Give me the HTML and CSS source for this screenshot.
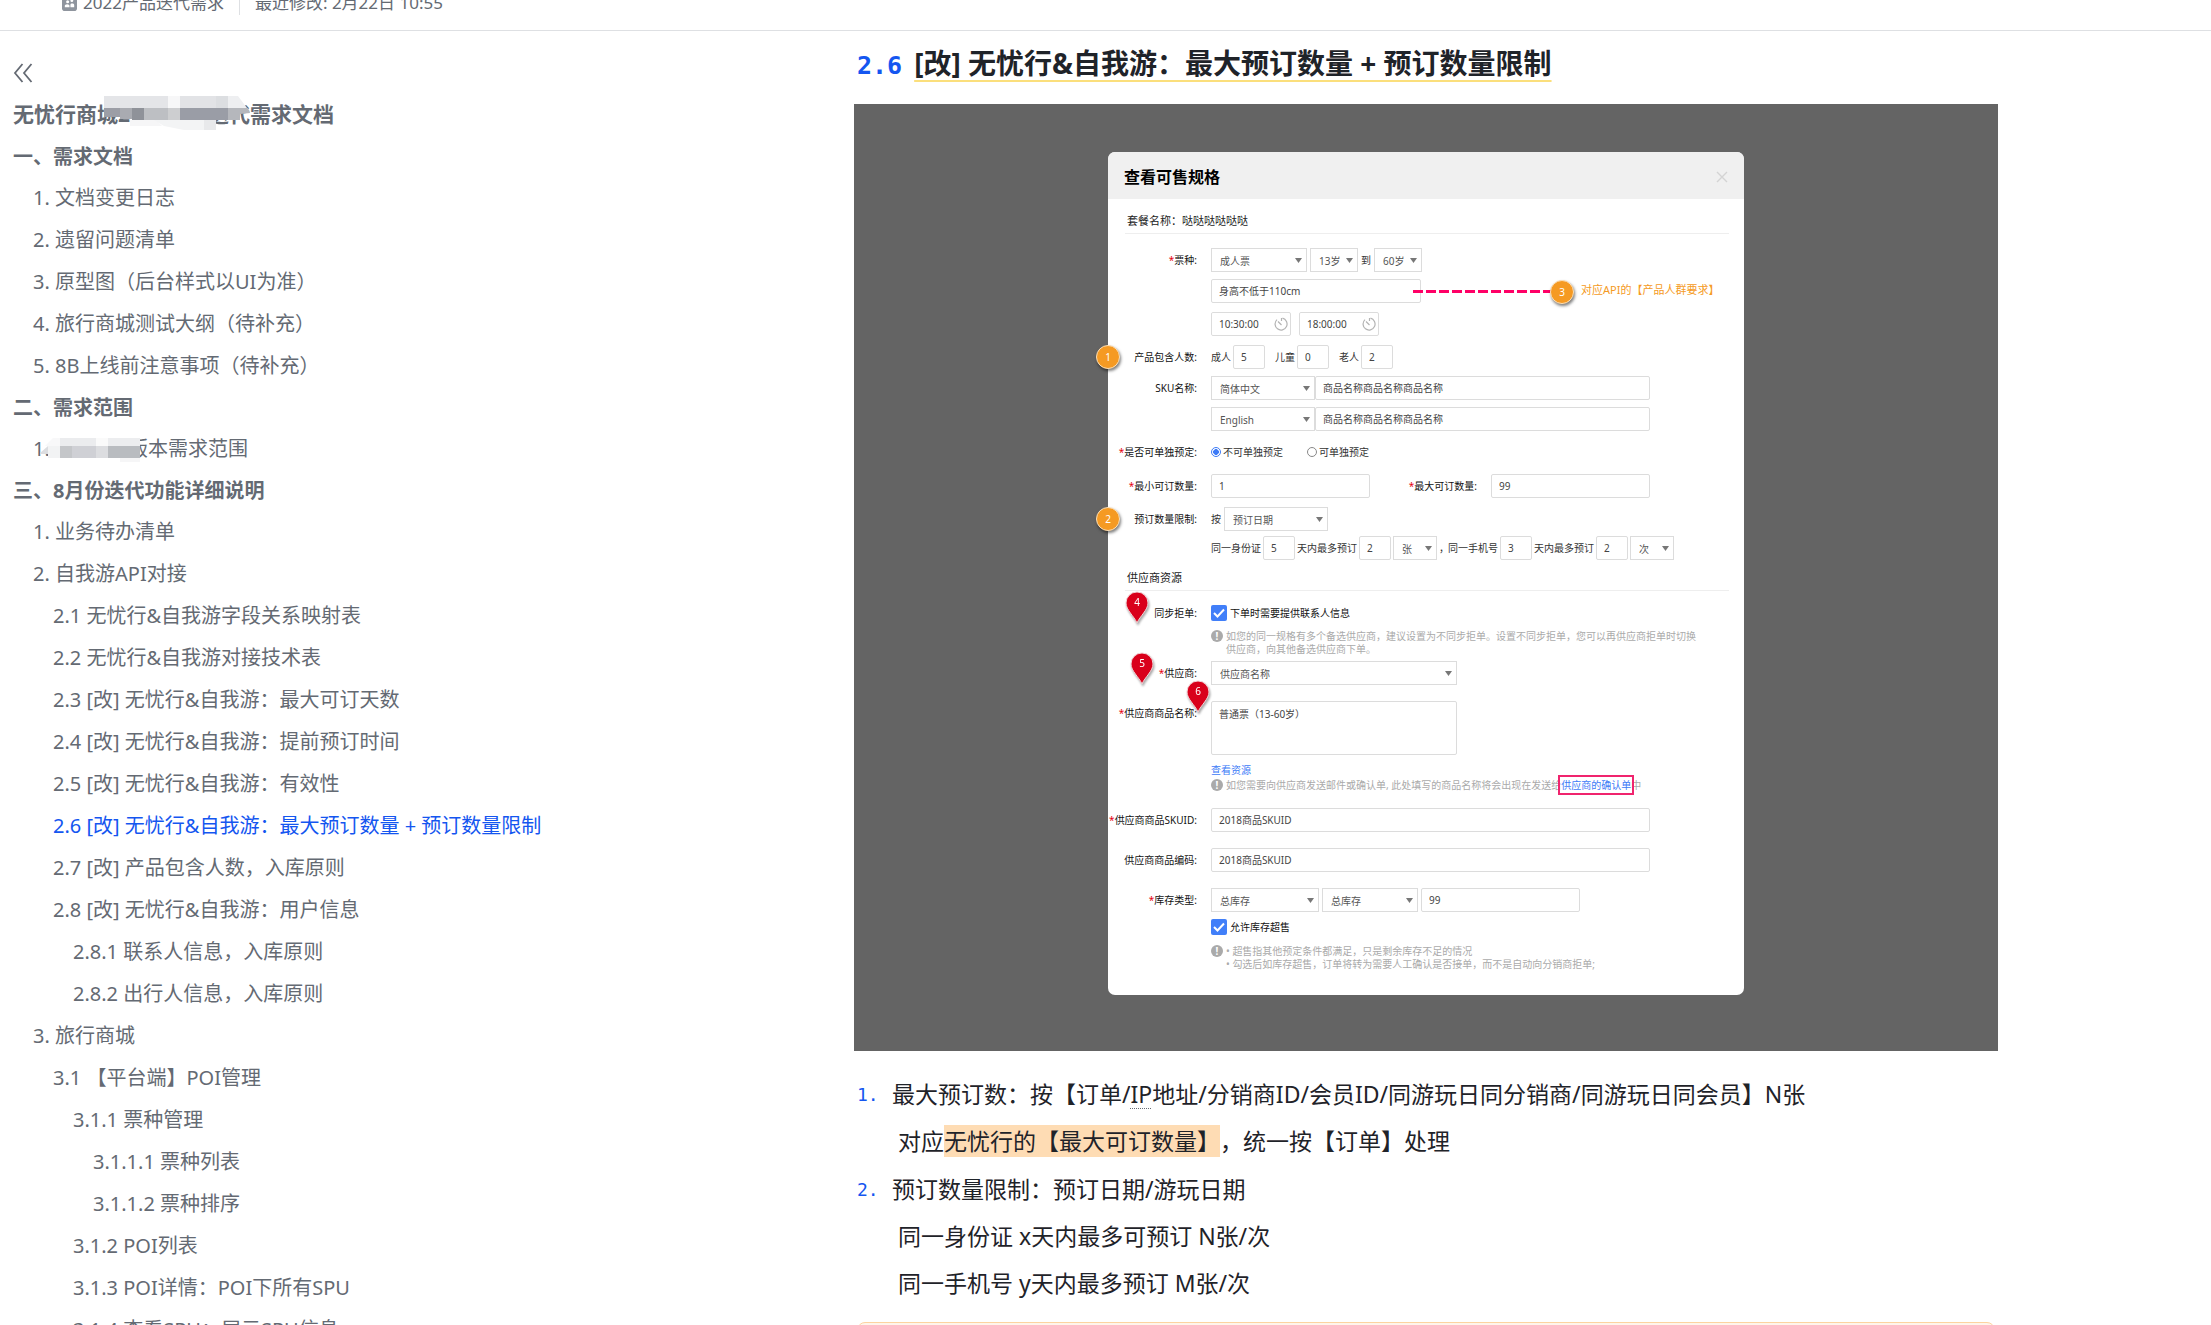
FILE: index.html
```html
<!DOCTYPE html>
<html lang="zh-CN">
<head>
<meta charset="utf-8">
<title>迭代需求文档</title>
<link rel="stylesheet" href="styles.css">
</head>
<body>
<header class="topbar">
  <div class="topbar-meta">
    <svg class="topbar-icon" viewBox="0 0 16 16" aria-hidden="true"><rect width="16" height="16" rx="3" fill="#8f959e"/><circle cx="6" cy="6" r="1.6" fill="#fff"/><circle cx="10.500" cy="5" r="1.500" fill="#fff"/><path d="M3 12v-1.500c0-1 1-1.800 2.500-1.800S8 9.500 8 10.500V12zM9 12V9.500c0-1 .6-1.500 1.700-1.500S13 8.500 13 9.500V12z" fill="#fff"/></svg>
    <a class="topbar-folder" href="#">2022产品迭代需求</a>
    <span class="topbar-time">最近修改: 2月22日 10:55</span>
  </div>
</header>
<div class="layout">
  <aside class="sidebar">
    <button class="collapse" type="button" aria-label="收起目录"><svg viewBox="0 0 20 20" aria-hidden="true"><path d="M9.500 1 2 10l7.500 9M18.500 1 11 10l7.500 9" fill="none" stroke="#646a73" stroke-width="1.800"/></svg></button>
    <nav class="toc" aria-label="目录">
      <a class="toc-title" href="#">无忧行商城<span class="redacted redacted-title">2<svg class="mosaic-title" viewBox="0 0 146 34" aria-hidden="true"><path d="M0 0h64v12H0z" fill="#e4e5e8"/><path d="M64 0h12v12H64z" fill="#f7f7f8"/><path d="M76 0h36v12H76z" fill="#e2e3e6"/><path d="M112 0h12v12h-12z" fill="#dcdee1"/><path d="M124 0h10l9 12h-19z" fill="#eeeff1"/><path d="M0 12h16v9H0z" fill="#9c9ea6"/><path d="M16 12h12v11H16z" fill="#a9abb1"/><path d="M28 12h12v12H28z" fill="#8f9299"/><path d="M40 12h24v12H40z" fill="#bdbfc3"/><path d="M64 12h12v12H64z" fill="#cdced0"/><path d="M76 12h48v12H76z" fill="#9a9da6"/><path d="M124 12h20l2 5-10 1v6h-12z" fill="#b5b7bc"/><path d="M26 24h26l6 6h-32z" fill="#f6f6f7"/><path d="M50 24h50v10H80l-20-4z" fill="#f3f4f5"/><path d="M100 24h12v10h-12z" fill="#e8e9eb"/></svg></span>迭代需求文档</a>
      <a class="toc-chapter" href="#">一、需求文档</a>
      <a class="toc-2" href="#">1. 文档变更日志</a>
      <a class="toc-2" href="#">2. 遗留问题清单</a>
      <a class="toc-2" href="#">3. 原型图（后台样式以UI为准）</a>
      <a class="toc-2" href="#">4. 旅行商城测试大纲（待补充）</a>
      <a class="toc-2" href="#">5. 8B上线前注意事项（待补充）</a>
      <a class="toc-chapter" href="#">二、需求范围</a>
      <a class="toc-2" href="#">1. <span class="redacted redacted-entry"><svg class="mosaic-entry" viewBox="0 0 102 24" aria-hidden="true"><path d="M6 8 14 0h7v8z" fill="#f8f8f9"/><path d="M21 0h36v8H21z" fill="#ebecee"/><path d="M57 0h12v8H57z" fill="#fafafa"/><path d="M69 0h32v8H69z" fill="#ecedef"/><path d="M1 15 9 8v8H1z" fill="#dcdde0"/><path d="M9 8h12v12H9z" fill="#f2f3f4"/><path d="M21 8h12v12H21z" fill="#c4c6c9"/><path d="M33 8h24v12H33z" fill="#cfd0d5"/><path d="M57 8h12v12H57z" fill="#dcdde0"/><path d="M69 8h32v12H69z" fill="#b9bcc0"/><path d="M81 20h20v4H81z" fill="#f6f6f7"/></svg></span>版本需求范围</a>
      <a class="toc-chapter" href="#">三、8月份迭代功能详细说明</a>
      <a class="toc-2" href="#">1. 业务待办清单</a>
      <a class="toc-2" href="#">2. 自我游API对接</a>
      <a class="toc-3" href="#">2.1 无忧行&amp;自我游字段关系映射表</a>
      <a class="toc-3" href="#">2.2 无忧行&amp;自我游对接技术表</a>
      <a class="toc-3" href="#">2.3 [改] 无忧行&amp;自我游：最大可订天数</a>
      <a class="toc-3" href="#">2.4 [改] 无忧行&amp;自我游：提前预订时间</a>
      <a class="toc-3" href="#">2.5 [改] 无忧行&amp;自我游：有效性</a>
      <a class="toc-3 is-current" href="#s26" aria-current="true">2.6 [改] 无忧行&amp;自我游：最大预订数量 + 预订数量限制</a>
      <a class="toc-3" href="#">2.7 [改] 产品包含人数，入库原则</a>
      <a class="toc-3" href="#">2.8 [改] 无忧行&amp;自我游：用户信息</a>
      <a class="toc-4" href="#">2.8.1 联系人信息，入库原则</a>
      <a class="toc-4" href="#">2.8.2 出行人信息，入库原则</a>
      <a class="toc-2" href="#">3. 旅行商城</a>
      <a class="toc-3" href="#">3.1 【平台端】POI管理</a>
      <a class="toc-4" href="#">3.1.1 票种管理</a>
      <a class="toc-5" href="#">3.1.1.1 票种列表</a>
      <a class="toc-5" href="#">3.1.1.2 票种排序</a>
      <a class="toc-4" href="#">3.1.2 POI列表</a>
      <a class="toc-4" href="#">3.1.3 POI详情：POI下所有SPU</a>
      <a class="toc-4" href="#">3.1.4 查看SPU：展示SPU信息</a>
    </nav>
  </aside>

  <main class="article">
    <h2 class="heading" id="s26"><span class="heading-no">2.6</span><span class="heading-text">[改] 无忧行&amp;自我游：最大预订数量 + 预订数量限制</span></h2>

    <figure class="mockup">
      <div class="dialog">
        <div class="dialog-head">
          <h3>查看可售规格</h3>
          <button class="dialog-close" type="button" aria-label="关闭"><svg viewBox="0 0 12 12" aria-hidden="true"><path d="M1 1l10 10M11 1 1 11" fill="none" stroke="#d4d4d4" stroke-width="1.400"/></svg></button>
        </div>
        <form class="form">
          <h4 class="section">套餐名称：哒哒哒哒哒哒</h4>
          <div class="row first">
            <label class="name required" for="ticket">票种:</label>
            <div class="fields gap-3">
              <select id="ticket" class="w-96"><option>成人票</option></select>
              <select class="w-48" aria-label="最小年龄"><option>13岁</option></select>
              <span>到</span>
              <select class="w-48" aria-label="最大年龄"><option>60岁</option></select>
            </div>
          </div>
          <div class="row sp-7">
            <div class="fields col-2"><input class="w-210" type="text" value="身高不低于110cm" aria-label="人群要求"></div>
          </div>
          <div class="row sp-9">
            <div class="fields col-2 gap-8">
              <span class="time"><input type="text" value="10:30:00" aria-label="开始时间"><svg viewBox="0 0 14 14" aria-hidden="true"><path d="M8.500 1.200A6 6 0 1 1 3 2.600M7.500 1v3M4 4.500 7.500 8" fill="none" stroke="#b4b4b4" stroke-width="1.200"/></svg></span>
              <span class="time"><input type="text" value="18:00:00" aria-label="结束时间"><svg viewBox="0 0 14 14" aria-hidden="true"><path d="M8.500 1.200A6 6 0 1 1 3 2.600M7.500 1v3M4 4.500 7.500 8" fill="none" stroke="#b4b4b4" stroke-width="1.200"/></svg></span>
            </div>
          </div>
          <div class="row sp-9">
            <span class="name">产品包含人数:</span>
            <div class="fields gap-10">
              <label class="pair">成人<input class="w-32" type="text" value="5"></label>
              <label class="pair">儿童<input class="w-32" type="text" value="0"></label>
              <label class="pair">老人<input class="w-32" type="text" value="2"></label>
            </div>
          </div>
          <div class="row sp-7">
            <label class="name" for="sku1">SKU名称:</label>
            <div class="fields">
              <select class="w-104" aria-label="语言"><option>简体中文</option></select>
              <input id="sku1" class="w-335" type="text" value="商品名称商品名称商品名称">
            </div>
          </div>
          <div class="row sp-7">
            <div class="fields col-2">
              <select class="w-104" aria-label="语言"><option>English</option></select>
              <input class="w-335" type="text" value="商品名称商品名称商品名称" aria-label="英文名称">
            </div>
          </div>
          <div class="row sp-9">
            <span class="name required">是否可单独预定:</span>
            <div class="fields gap-24">
              <label class="radio"><input type="radio" name="single" checked>不可单独预定</label>
              <label class="radio"><input type="radio" name="single">可单独预定</label>
            </div>
          </div>
          <div class="row sp-10">
            <label class="name required" for="min">最小可订数量:</label>
            <div class="fields gap-14">
              <input id="min" class="w-159" type="text" value="1">
              <label class="name name-mid required" for="max">最大可订数量:</label>
              <input id="max" class="w-159" type="text" value="99">
            </div>
          </div>
          <div class="row sp-9">
            <label class="name" for="limit">预订数量限制:</label>
            <div class="fields gap-3">
              <span>按</span>
              <select id="limit" class="w-104"><option>预订日期</option></select>
            </div>
          </div>
          <div class="row sp-5">
            <div class="fields col-2 gap-2">
              <span>同一身份证</span>
              <input class="w-32" type="text" value="5" aria-label="身份证天数">
              <span>天内最多预订</span>
              <input class="w-32" type="text" value="2" aria-label="身份证数量">
              <select class="w-44" aria-label="身份证单位"><option>张</option></select>
              <span class="comma">，</span><span>同一手机号</span>
              <input class="w-32" type="text" value="3" aria-label="手机号天数">
              <span>天内最多预订</span>
              <input class="w-32" type="text" value="2" aria-label="手机号数量">
              <select class="w-44" aria-label="手机号单位"><option>次</option></select>
            </div>
          </div>

          <h4 class="section section-next">供应商资源</h4>
          <div class="row sp-10">
            <span class="name">同步拒单:</span>
            <div class="fields"><label class="check"><input type="checkbox" checked>下单时需要提供联系人信息</label></div>
          </div>
          <div class="row sp-5">
            <div class="hint col-2"><i class="alert">!</i><p>如您的同一规格有多个备选供应商，建议设置为不同步拒单。设置不同步拒单，您可以再供应商拒单时切换<br>供应商，向其他备选供应商下单。</p></div>
          </div>
          <div class="row sp-5">
            <label class="name required" for="supplier">供应商:</label>
            <div class="fields"><select id="supplier" class="w-246"><option>供应商名称</option></select></div>
          </div>
          <div class="row sp-16">
            <label class="name required" for="goods">供应商商品名称:</label>
            <div class="fields"><textarea id="goods" class="w-246">普通票（13-60岁）</textarea></div>
          </div>
          <div class="row sp-7">
            <a class="view-link col-2" href="#">查看资源</a>
            <div class="hint col-2"><i class="alert">!</i><p>如您需要向供应商发送邮件或确认单, 此处填写的商品名称将会出现在发送给<a class="boxed" href="#">供应商的确认单</a>中</p></div>
          </div>
          <div class="row sp-16">
            <label class="name required" for="skuid">供应商商品SKUID:</label>
            <div class="fields"><input id="skuid" class="w-439" type="text" value="2018商品SKUID"></div>
          </div>
          <div class="row sp-16">
            <label class="name" for="code">供应商商品编码:</label>
            <div class="fields"><input id="code" class="w-439" type="text" value="2018商品SKUID"></div>
          </div>
          <div class="row sp-16">
            <label class="name required" for="stock">库存类型:</label>
            <div class="fields gap-3">
              <select id="stock" class="w-108"><option>总库存</option></select>
              <select class="w-96" aria-label="库存范围"><option>总库存</option></select>
              <input class="w-159" type="text" value="99" aria-label="库存数量">
            </div>
          </div>
          <div class="row sp-7">
            <label class="check col-2"><input type="checkbox" checked>允许库存超售</label>
          </div>
          <div class="row sp-10">
            <div class="hint col-2"><i class="alert">!</i><ul><li>超售指其他预定条件都满足，只是剩余库存不足的情况</li><li>勾选后如库存超售，订单将转为需要人工确认是否接单，而不是自动向分销商拒单;</li></ul></div>
          </div>
        </form>

        <span class="leader"></span>
        <span class="dot dot-1">1</span>
        <span class="dot dot-2">2</span>
        <span class="dot dot-3">3</span>
        <span class="remark">对应API的【产品人群要求】</span>
        <span class="pin pin-4"><svg viewBox="0 0 26 34" aria-hidden="true"><path d="M13 32C10 25 2 19 2 12a11 11 0 0 1 22 0c0 7-8 13-11 20z" fill="#d9001b" stroke="#f1d3d6"/></svg><b>4</b></span>
        <span class="pin pin-5"><svg viewBox="0 0 26 34" aria-hidden="true"><path d="M13 32C10 25 2 19 2 12a11 11 0 0 1 22 0c0 7-8 13-11 20z" fill="#d9001b" stroke="#f1d3d6"/></svg><b>5</b></span>
        <span class="pin pin-6"><svg viewBox="0 0 26 34" aria-hidden="true"><path d="M13 32C10 25 2 19 2 12a11 11 0 0 1 22 0c0 7-8 13-11 20z" fill="#d9001b" stroke="#f1d3d6"/></svg><b>6</b></span>
      </div>
    </figure>

    <ol class="notes">
      <li>最大预订数：按【订单/<span class="spell">IP</span>地址/分销商ID/会员ID/同游玩日同分销商/同游玩日同会员】N张
        <p>对应<mark>无忧行的【最大可订数量】</mark>，统一按【订单】处理</p>
      </li>
      <li>预订数量限制：预订日期/游玩日期
        <p>同一身份证 x天内最多可预订 N张/次</p>
        <p>同一手机号 y天内最多预订 M张/次</p>
      </li>
    </ol>
    <div class="callout"></div>
  </main>
</div>
</body>
</html>
```
FILE: styles.css
```css
* { box-sizing: border-box; }

body {
  margin: 0;
  height: 100vh;
  overflow: hidden;
  background: #fff;
  color: #1f2329;
  font-family: "Noto Sans", "Noto Sans CJK SC", sans-serif;
  text-spacing-trim: space-all;
}

a { color: inherit; text-decoration: none; }
button { padding: 0; border: 0; background: none; }
svg { display: block; }

/* Top bar, partly scrolled out of view */
.topbar {
  height: 31px;
  overflow: hidden;
  border-bottom: 1px solid #dee0e3;
}
.topbar-meta {
  display: flex;
  align-items: center;
  margin: -9px 0 0 62px;
  color: #646a73;
  font-size: 17px;
  line-height: 24px;
}
.topbar-icon { width: 15px; height: 15px; margin-right: 6px; }
.topbar-folder { padding-right: 15px; border-right: 1px solid #dee0e3; }
.topbar-time { padding-left: 15px; }

.layout {
  display: grid;
  grid-template-columns: minmax(0, 854fr) minmax(0, 1357fr);
}

/* Table of contents */
.sidebar { padding: 27px 13px 0; color: #646a73; }
.collapse { display: block; width: 20px; height: 36px; padding: 5px 0 11px; }
.collapse svg { width: 20px; height: 20px; }
.toc { display: flex; flex-direction: column; font-size: 20px; line-height: 42px; white-space: nowrap; }
.toc-title { margin-bottom: 2px; font-size: 21px; font-weight: 700; line-height: 40px; }
.toc-chapter { font-weight: 700; line-height: 41px; }
.toc-2 { padding-left: 20px; }
.toc-3 { padding-left: 40px; }
.toc-4 { padding-left: 60px; }
.toc-5 { padding-left: 80px; }
.is-current { color: #1456f0; }
.redacted { display: inline-block; position: relative; }
.redacted-title { width: 90px; }
.redacted-entry { width: 73px; }
.mosaic-title { position: absolute; left: -14px; top: 2px; width: 146px; height: 34px; }
.mosaic-entry { position: absolute; left: -16px; bottom: -6px; width: 102px; height: 24px; }

/* Article */
.article { max-width: 1144px; padding-top: 12px; }
.heading {
  display: flex;
  align-items: baseline;
  gap: 12px;
  height: 40px;
  margin: 0 0 21px 3px;
  font-size: 28px;
  line-height: 40px;
  white-space: nowrap;
}
.heading-no { color: #1456f0; font-family: "DejaVu Sans Mono", monospace; font-size: 25px; }
.heading-text {
  text-decoration: underline 2px #fbdf7c;
  text-underline-offset: 6px;
  text-decoration-skip-ink: none;
}

.mockup { margin: 0; padding: 48px 0 56px; background: #646464; }
.dialog {
  position: relative;
  width: 636px;
  margin: 0 auto;
  border-radius: 7px;
  background: #fff;
  color: #333;
  font-size: 10px;
  line-height: 24px;
  white-space: nowrap;
}
.dialog-head {
  display: flex;
  align-items: center;
  justify-content: space-between;
  height: 47px;
  padding: 2px 16px 0;
  border-radius: 7px 7px 0 0;
  background: #f0f0f0;
}
.dialog-head h3 { margin: 0; color: #000; font-size: 16px; }
.dialog-close svg { width: 12px; height: 12px; }

.form { padding: 10px 15px 24px 0; }
.section {
  margin: 0 0 0 17px;
  padding-left: 2px;
  border-bottom: 1px solid #eee;
  color: #222;
  font-size: 11px;
  font-weight: 400;
}
.section-next { margin-top: 6px; }

.row { display: grid; grid-template-columns: 89px minmax(0, 1fr); column-gap: 14px; }
.first { margin-top: 14px; }
.sp-5 { margin-top: 5px; }
.sp-7 { margin-top: 7px; }
.sp-9 { margin-top: 9px; }
.sp-10 { margin-top: 10px; }
.sp-16 { margin-top: 16px; }
.col-2 { grid-column: 2; }
.name { color: #111; text-align: right; }
.name-mid { width: 93px; }
.required::before { content: "*"; color: #e60012; }
.fields { display: flex; }
.gap-2 { gap: 2px; }
.gap-3 { gap: 3px; }
.gap-8 { gap: 8px; }
.gap-10 { gap: 10px; }
.gap-14 { gap: 14px; }
.gap-24 { gap: 24px; }
.comma { width: 7px; }

input[type="text"], select, textarea {
  display: block;
  flex: none;
  height: 24px;
  margin: 0;
  padding: 0 7px;
  border: 1px solid #dcdcdc;
  border-radius: 2px;
  background: #fff;
  color: #444;
  font: inherit;
}
select {
  appearance: none;
  padding: 0 8px;
  border-radius: 0;
  color: #555;
  background: url("data:image/svg+xml,%3Csvg xmlns='http://www.w3.org/2000/svg' viewBox='0 0 7 5'%3E%3Cpath d='M0 0h7L3.5 5z' fill='%23777'/%3E%3C/svg%3E") no-repeat right 4px center / 7px 5px;
}
textarea { height: 54px; resize: none; overflow: hidden; }
.w-32 { width: 32px; }
.w-44 { width: 44px; }
.w-48 { width: 48px; }
.w-96 { width: 96px; }
.w-104 { width: 104px; }
.w-108 { width: 108px; }
.w-159 { width: 159px; }
.w-210 { width: 210px; }
.w-246 { width: 246px; }
.w-335 { width: 335px; }
.w-439 { width: 439px; }

.time { display: flex; align-items: center; width: 80px; border: 1px solid #dcdcdc; border-radius: 2px; }
.time input[type="text"] { width: 62px; height: 22px; border: 0; }
.time svg { width: 14px; height: 14px; }
.pair { display: flex; gap: 2px; }

.radio, .check { display: flex; align-items: center; }
.radio { gap: 2px; }
.radio input {
  appearance: none;
  width: 10px;
  height: 10px;
  margin: 0;
  border: 1px solid #888;
  border-radius: 50%;
}
.radio input:checked { border-color: #3d7bf7; background: radial-gradient(#3d7bf7 45%, #fff 55%); }
.check { gap: 3px; color: #111; }
.check.col-2 { line-height: 16px; }
.check input {
  appearance: none;
  width: 16px;
  height: 16px;
  margin: 0;
  border-radius: 2px;
  background: #417ff9 url("data:image/svg+xml,%3Csvg xmlns='http://www.w3.org/2000/svg' viewBox='0 0 16 16'%3E%3Cpath d='M3 8l3.500 3.500L13 4.500' fill='none' stroke='%23fff' stroke-width='2'/%3E%3C/svg%3E");
}

.hint { display: flex; gap: 3px; color: #aaa; line-height: 13px; }
.hint p, .hint ul { margin: 0; padding: 0; }
.hint ul { list-style: none; }
.hint li::before { content: "• "; }
.alert {
  width: 12px;
  height: 12px;
  border-radius: 50%;
  background: #aaa;
  color: #fff;
  font-size: 10px;
  font-style: normal;
  font-weight: 700;
  line-height: 12px;
  text-align: center;
}
.view-link { color: #3d7bf7; line-height: 17px; }
.boxed { color: #3d7bf7; outline: 2px solid #f0246e; outline-offset: 1px; }

/* Review annotations laid over the dialog */
.dot, .pin, .leader, .remark { position: absolute; }
.dot {
  width: 24px;
  height: 24px;
  border: 1px solid #fbe0bb;
  border-radius: 50%;
  background: #f59a23;
  box-shadow: 1px 2px 3px rgba(0, 0, 0, .5);
  color: #fff;
  line-height: 22px;
  text-align: center;
}
.dot-1 { left: -12px; top: 193px; }
.dot-2 { left: -12px; top: 355px; }
.dot-3 { left: 442px; top: 128px; }
.leader {
  left: 305px;
  top: 138px;
  width: 138px;
  height: 3px;
  background: repeating-linear-gradient(90deg, #ff0066 0 10px, transparent 10px 13px);
}
.remark { left: 473px; top: 126px; color: #f59a23; font-size: 11px; }
.pin { width: 26px; height: 34px; filter: drop-shadow(1px 2px 1px rgba(0, 0, 0, .35)); }
.pin b {
  position: absolute;
  inset: 0;
  color: #fff;
  font-weight: 400;
  line-height: 22px;
  text-align: center;
}
.pin-4 { left: 16px; top: 439px; }
.pin-5 { left: 21px; top: 500px; }
.pin-6 { left: 77px; top: 528px; }

/* Notes under the mock-up */
.notes {
  margin: 20px 0 15px;
  padding: 0;
  list-style: none;
  counter-reset: note;
  font-size: 23px;
  line-height: 47px;
  white-space: nowrap;
}
.notes li { position: relative; padding-left: 38px; counter-increment: note; }
.notes li + li { margin-top: 1px; }
.notes li::before {
  content: counter(note) ".";
  position: absolute;
  left: 3px;
  color: #1456f0;
  font-family: "DejaVu Sans Mono", monospace;
  font-size: 18px;
}
.notes p { margin: 0; padding-left: 6px; }
.notes mark { padding: 0; background: #fedcb4; color: inherit; }
.spell { text-decoration: underline dotted 1px #646a73; text-underline-offset: 5px; }

.callout { height: 80px; margin: 0 3px; border: 1px solid #fdd3a0; border-radius: 8px; background: #fff5eb; }
```
